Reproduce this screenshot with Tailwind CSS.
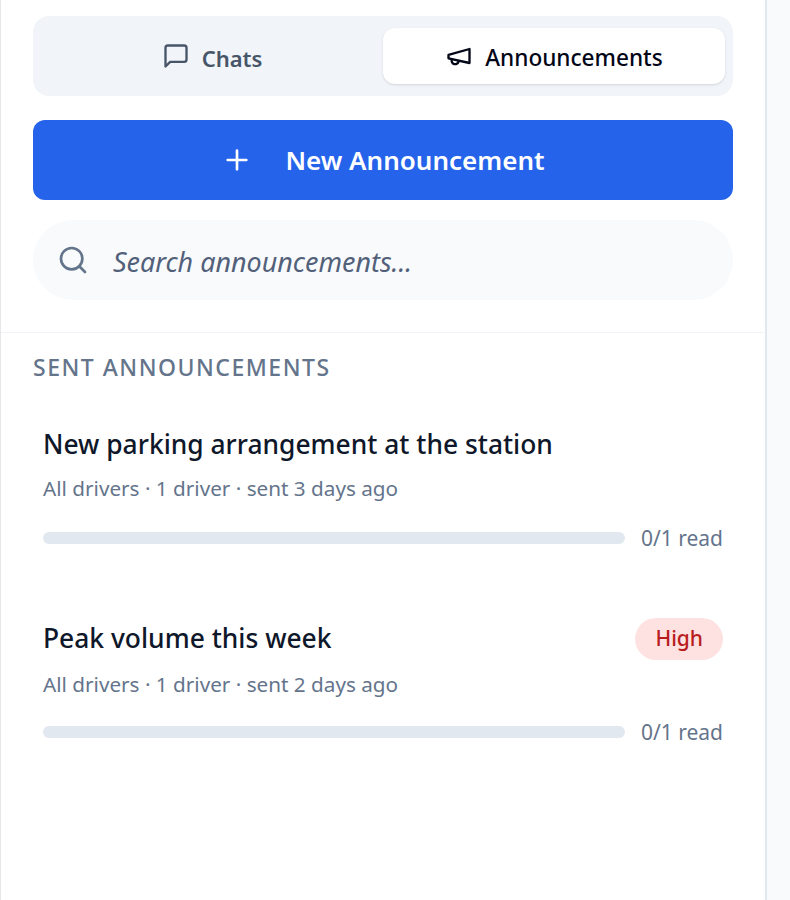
<!DOCTYPE html>
<html lang="en">
<head>
<meta charset="utf-8">
<script src="https://cdn.jsdelivr.net/npm/@tailwindcss/browser@4"></script>
</head>
<body class="bg-[#f8fafc] font-['Noto_Sans',sans-serif]">
<div class="w-[767px] h-[900px] bg-white border-l border-l-[#e5e7eb] border-r-2 border-r-[#e2e8f0] overflow-hidden">
  <div class="pt-4 px-8 pb-8 border-b border-[#f1f5f9]">
    <div class="flex items-center h-20 px-2 rounded-2xl bg-[#f1f5f9]">
      <div class="flex-1 h-14 flex items-center justify-center gap-3 text-[#475569] text-[22px] font-semibold">
        <svg class="w-7 h-7 -mt-[1px]" viewBox="0 0 24 24" fill="none" stroke="currentColor" stroke-width="2" stroke-linecap="round" stroke-linejoin="round"><path d="M21 15a2 2 0 0 1-2 2H7l-4 4V5a2 2 0 0 1 2-2h14a2 2 0 0 1 2 2z"/></svg>
        <span class="pt-1">Chats</span>
      </div>
      <div class="w-[342px] h-14 flex items-center justify-center gap-3 rounded-xl bg-white shadow-sm text-[#020617] text-[22.6px] font-medium">
        <svg class="w-7 h-7" viewBox="0 0 24 24" fill="none" stroke="currentColor" stroke-width="2" stroke-linecap="round" stroke-linejoin="round"><path d="m3 11 18-5v12L3 14v-3z"/><path d="M11.6 16.8a3 3 0 1 1-5.8-1.6"/></svg>
        <span class="pt-1">Announcements</span>
      </div>
    </div>
    <div class="mt-6 h-20 rounded-xl bg-[#2563eb] text-white flex items-center justify-center gap-[32px] text-[26px] font-semibold">
      <svg class="w-8 h-8" viewBox="0 0 24 24" fill="none" stroke="currentColor" stroke-width="2" stroke-linecap="round"><path d="M5 12h14M12 5v14"/></svg>
      <span>New Announcement</span>
    </div>
    <div class="mt-5 h-20 rounded-[40px] bg-[#f8fafc] flex items-center pl-6 gap-6 text-[#52607a]">
      <svg class="w-8 h-8 shrink-0 text-[#64748b]" viewBox="0 0 24 24" fill="none" stroke="currentColor" stroke-width="2" stroke-linecap="round" stroke-linejoin="round"><circle cx="11" cy="11" r="8"/><path d="m21 21-4.3-4.3"/></svg>
      <span class="italic text-[26.9px] pt-1">Search announcements...</span>
    </div>
  </div>
  <div class="px-8 pt-[19px]">
    <div class="text-[23px] leading-[30px] font-medium tracking-[1.5px] text-[#64748b]">SENT ANNOUNCEMENTS</div>
    <div class="mt-[43px] px-[10px]">
      <div class="flex items-center justify-between h-[38px]">
        <span class="text-[26.4px] font-medium text-[#0f172a] pt-[2px]">New parking arrangement at the station</span>
      </div>
      <div class="mt-[10px] text-[20.7px] leading-[30px] text-[#64748b]">All drivers · 1 driver · sent 3 days ago</div>
      <div class="mt-5 flex items-center gap-4">
        <div class="flex-1 h-3 rounded-full bg-[#e2e8f0]"></div>
        <span class="text-[21px] leading-[30px] text-[#64748b]">0/1 read</span>
      </div>
      <div class="mt-[65px] flex items-center justify-between h-[42px]">
        <span class="text-[26.4px] font-medium text-[#0f172a]">Peak volume this week</span>
        <span class="h-[42px] px-5 rounded-full bg-[#fee2e2] text-[#b91c1c] text-[21px] font-medium flex items-center">High</span>
      </div>
      <div class="mt-[9px] text-[20.7px] leading-[30px] text-[#64748b]">All drivers · 1 driver · sent 2 days ago</div>
      <div class="mt-[18px] flex items-center gap-4">
        <div class="flex-1 h-3 rounded-full bg-[#e2e8f0]"></div>
        <span class="text-[21px] leading-[30px] text-[#64748b]">0/1 read</span>
      </div>
    </div>
  </div>
</div>
</body>
</html>
